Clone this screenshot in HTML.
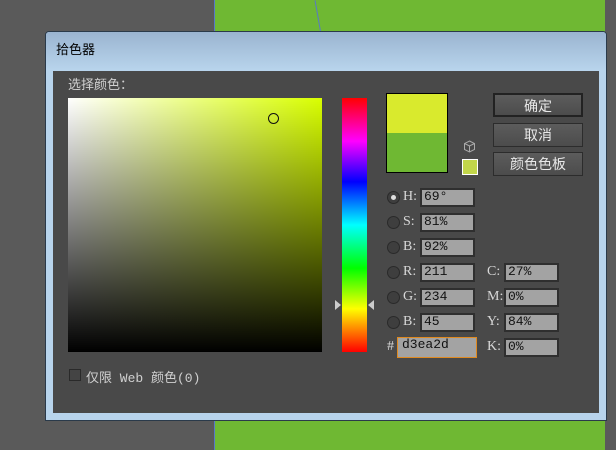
<!DOCTYPE html>
<html><head><meta charset="utf-8"><style>
*{margin:0;padding:0;box-sizing:border-box}
body{width:616px;height:450px;overflow:hidden;background:#5a5a5a;position:relative;font-family:"Liberation Sans","Noto Sans CJK SC",sans-serif}
.abs{position:absolute}
.lbl{position:absolute;color:#d8d8d8;font-family:"Liberation Serif","Noto Serif CJK SC",serif;font-size:14px}
.radio{position:absolute;width:13px;height:13px;border-radius:50%;background:#3e3e3e;border:1px solid #2a2a2a}
.inp{position:absolute;width:55px;height:19px;background:#a3a3a3;border:2px solid #2f2f2f;font-family:"Liberation Mono",monospace;font-size:13px;color:#111;padding-left:2px;line-height:14px}
.btn{position:absolute;left:493px;width:90px;height:24px;background:linear-gradient(#5c5c5c,#4c4c4c);border:1px solid #2c2c2c;color:#e8e8e8;font-size:14px;text-align:center;line-height:22px}
</style></head><body>
<div class="abs" style="left:214px;top:0;width:391px;height:450px;background:#6fb833;border-left:1px solid #5878c8"></div>
<div class="abs" style="left:318px;top:0;width:1px;height:40px;background:#5878c8;transform:rotate(-10deg)"></div>
<div class="abs" style="left:45px;top:31px;width:562px;height:390px;background:#b8d4ec;border:1px solid #2a3a4a;border-radius:4px 4px 0 0"></div>
<div class="abs" style="left:46px;top:32px;width:560px;height:38px;background:linear-gradient(#9ab4d0,#b8d4ec);border-radius:3px 3px 0 0"></div>
<div class="abs" style="left:56px;top:39px;font-size:13px;color:#000">拾色器</div>
<div class="abs" style="left:53px;top:71px;width:546px;height:342px;background:#494949"></div>
<div class="abs" style="left:68px;top:74px;font-size:13px;color:#d0d0d0">选择颜色：</div>
<div class="abs" style="left:68px;top:98px;width:254px;height:254px;background:linear-gradient(to bottom,rgba(0,0,0,0),#000),linear-gradient(to right,#fff,#d9ff00)"></div>
<div class="abs" style="left:268px;top:113px;width:11px;height:11px;border-radius:50%;border:1.5px solid #111"></div>
<div class="abs" style="left:342px;top:98px;width:25px;height:254px;background:linear-gradient(to bottom,#f00,#f0f 17%,#00f 33%,#0ff 50%,#0f0 67%,#ff0 83%,#f00)"></div>
<div class="abs" style="left:335px;top:300px;width:0;height:0;border-top:5px solid transparent;border-bottom:5px solid transparent;border-left:6px solid #ccc"></div>
<div class="abs" style="left:368px;top:300px;width:0;height:0;border-top:5px solid transparent;border-bottom:5px solid transparent;border-right:6px solid #ccc"></div>
<div class="abs" style="left:386px;top:93px;width:62px;height:80px;border:1px solid #000;background:linear-gradient(#d9ea2d 50%,#6fb833 50%)"></div>
<svg class="abs" style="left:463px;top:140px" width="13" height="13" viewBox="0 0 13 13"><path d="M6.5 1L11.5 3.5V9.5L6.5 12L1.5 9.5V3.5Z M1.5 3.5L6.5 6L11.5 3.5 M6.5 6V12" fill="none" stroke="#aaa" stroke-width="1"/></svg>
<div class="abs" style="left:462px;top:159px;width:16px;height:16px;background:#c2d64a;border:1px solid #fff"></div>
<div class="btn" style="top:93px;border:2px solid #222">确定</div>
<div class="btn" style="top:123px">取消</div>
<div class="btn" style="top:152px">颜色色板</div>

<div class="radio" style="left:387px;top:191px"><div style="position:absolute;left:3px;top:3px;width:5px;height:5px;border-radius:50%;background:#ddd"></div></div>
<div class="lbl" style="left:403px;top:189px">H:</div><div class="inp" style="left:420px;top:188px">69°</div>
<div class="radio" style="left:387px;top:216px"></div>
<div class="lbl" style="left:403px;top:214px">S:</div><div class="inp" style="left:420px;top:213px">81%</div>
<div class="radio" style="left:387px;top:241px"></div>
<div class="lbl" style="left:403px;top:239px">B:</div><div class="inp" style="left:420px;top:238px">92%</div>
<div class="radio" style="left:387px;top:266px"></div>
<div class="lbl" style="left:403px;top:264px">R:</div><div class="inp" style="left:420px;top:263px">211</div>
<div class="radio" style="left:387px;top:291px"></div>
<div class="lbl" style="left:403px;top:289px">G:</div><div class="inp" style="left:420px;top:288px">234</div>
<div class="radio" style="left:387px;top:316px"></div>
<div class="lbl" style="left:403px;top:314px">B:</div><div class="inp" style="left:420px;top:313px">45</div>
<div class="lbl" style="left:387px;top:339px">#</div>
<div class="inp" style="left:397px;top:337px;width:80px;height:21px;border:1px solid #e08a20;padding-left:4px">d3ea2d</div>
<div class="lbl" style="left:487px;top:264px">C:</div><div class="inp" style="left:504px;top:263px">27%</div>
<div class="lbl" style="left:487px;top:289px">M:</div><div class="inp" style="left:504px;top:288px">0%</div>
<div class="lbl" style="left:487px;top:314px">Y:</div><div class="inp" style="left:504px;top:313px">84%</div>
<div class="lbl" style="left:487px;top:339px">K:</div><div class="inp" style="left:504px;top:338px">0%</div>

<div class="abs" style="left:69px;top:369px;width:12px;height:12px;border:1px solid #2a2a2a;background:#444"></div>
<div class="abs" style="left:86px;top:367px;font-size:13px;color:#d0d0d0;font-family:'Liberation Mono','Noto Sans CJK SC',monospace">仅限 Web 颜色(0)</div>
</body></html>
